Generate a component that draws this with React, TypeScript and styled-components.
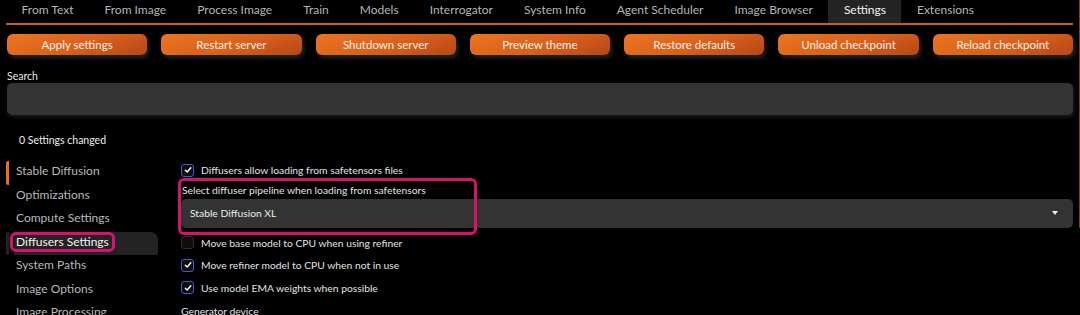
import styled, { createGlobalStyle } from 'styled-components';

const GlobalStyle = createGlobalStyle`
  html, body {
    margin: 0;
    padding: 0;
    background: #000;
    color: #e6e6e6;
    font-family: Lato, "Noto Sans", sans-serif;
    overflow: hidden;
  }
`

const Page = styled.div`
  position: relative;
  width: 1080px;
  height: 315px;
  overflow: hidden;
`

const ScrollEdge = styled.div`
  position: absolute;
  right: 0;
  top: 0;
  width: 1px;
  height: 228px;
  background: #7a4412;
`

const TabBar = styled.div`
  display: flex;
  margin: 0 7px 0 6px;
  height: 23px;
  border-bottom: 2px solid #c4620f;
`

const Tab = styled.div<{ $active?: boolean }>`
  padding: 0 15.5px;
  height: 23px;
  line-height: 20px;
  font-size: 12px;
  color: ${p => (p.$active ? '#f2f2f2' : '#b4b4b4')};
  background: ${p => (p.$active ? '#242424' : 'transparent')};
`

const ButtonRow = styled.div`
  display: flex;
  gap: 14px;
  margin: 9px 7px 0 7px;
`

const ActionButton = styled.button`
  flex: 1;
  height: 21px;
  border: none;
  border-radius: 6px;
  background: linear-gradient(160deg, #ec7420 0%, #d8601a 55%, #b6461a 100%);
  box-shadow: 2px 3px 4px rgba(70, 70, 70, 0.55);
  color: #f7f2ee;
  font-family: Lato, "Noto Sans", sans-serif;
  font-size: 11.5px;
  padding: 0;
`

const SearchLabel = styled.div`
  margin: 15px 7px 0 7px;
  font-size: 10.5px;
  color: #e8e8e8;
`

const SearchBox = styled.div`
  margin: 1px 7px 0 7px;
  height: 32px;
  background: #333;
  border-radius: 5px;
  box-shadow: 1px 2px 4px rgba(60, 60, 60, 0.5);
`

const ChangedNote = styled.div`
  margin: 19px 0 0 19px;
  font-size: 10.5px;
  color: #ededed;
`

const Body = styled.div`
  display: grid;
  grid-template-columns: 160px 1fr;
  margin: 13px 7px 0 6px;
`

const SideNav = styled.div`
  display: flex;
  flex-direction: column;
  padding-top: 2px;
`

const NavItem = styled.div<{ $current?: boolean; $selected?: boolean }>`
  height: 23.5px;
  line-height: 20px;
  margin-right: 8px;
  padding-left: 7px;
  font-size: 12px;
  color: ${p => (p.$selected ? '#f4f4f4' : '#b8b8b8')};
  border-left: 3px solid ${p => (p.$current ? '#e8701c' : 'transparent')};
  border-radius: 2px 8px 2px 2px;
  background: ${p => (p.$selected ? 'linear-gradient(90deg, transparent 5px, #232323 5px)' : 'transparent')};
`

const NavText = styled.span<{ $marked?: boolean }>`
  position: relative;
  &::after {
    content: '';
    display: ${p => (p.$marked ? 'block' : 'none')};
    position: absolute;
    left: -6px;
    top: -2px;
    right: -6px;
    bottom: -3px;
    border: 3px solid #d4136f;
    border-radius: 6px;
  }
`

const Main = styled.div`
  display: flex;
  flex-direction: column;
  padding-left: 15px;
  font-size: 10.3px;
  color: #e2e2e2;
`

const CheckRow = styled.div<{ $gapTop?: number }>`
  display: flex;
  align-items: center;
  gap: 7px;
  height: 22.5px;
  margin-top: ${p => p.$gapTop ?? 0}px;
`

const Box = styled.span<{ $on?: boolean }>`
  width: 11px;
  height: 11px;
  border-radius: 3px;
  border: 1px solid ${p => (p.$on ? '#3c5bd6' : '#2c2c2c')};
  background: #0d0d0d;
  display: flex;
  align-items: center;
  justify-content: center;
`

const Field = styled.div`
  position: relative;
  padding-top: 1px;
`

const FieldLabel = styled.div`
  height: 16px;
  line-height: 15px;
  padding-left: 1px;
`

const Dropdown = styled.div`
  display: flex;
  align-items: center;
  justify-content: space-between;
  height: 29px;
  padding: 0 15px 0 9px;
  background: #333;
  border-radius: 5px;
  color: #ededed;
`

const Caret = styled.span`
  width: 0;
  height: 0;
  border-left: 3.5px solid transparent;
  border-right: 3.5px solid transparent;
  border-top: 4px solid #f0f0f0;
`

const Highlight = styled.div`
  position: absolute;
  left: -3px;
  top: -4px;
  width: 299px;
  height: 57px;
  box-sizing: border-box;
  border: 3px solid #d4136f;
  border-radius: 6px;
  pointer-events: none;
`

const PlainLabel = styled.div`
  height: 24px;
  line-height: 24px;
`

function Check({ on }: { on: boolean }) {
  return (
    <Box $on={on}>
      {on && (
        <svg width="8" height="8" viewBox="0 0 8 8">
          <path d="M1.3 4.2 L3.2 6 L6.8 1.8" fill="none" stroke="#fff" strokeWidth="1.4" strokeLinecap="round" strokeLinejoin="round" />
        </svg>
      )}
    </Box>
  )
}

const tabs = ['From Text', 'From Image', 'Process Image', 'Train', 'Models', 'Interrogator', 'System Info', 'Agent Scheduler', 'Image Browser', 'Settings', 'Extensions']
const buttons = ['Apply settings', 'Restart server', 'Shutdown server', 'Preview theme', 'Restore defaults', 'Unload checkpoint', 'Reload checkpoint']
const nav = ['Stable Diffusion', 'Optimizations', 'Compute Settings', 'Diffusers Settings', 'System Paths', 'Image Options', 'Image Processing']

export default function App() {
  return (
    <Page>
      <GlobalStyle />
      <TabBar>
        {tabs.map(t => (
          <Tab key={t} $active={t === 'Settings'}>{t}</Tab>
        ))}
      </TabBar>

      <ButtonRow>
        {buttons.map(b => (
          <ActionButton key={b}>{b}</ActionButton>
        ))}
      </ButtonRow>

      <SearchLabel>Search</SearchLabel>
      <SearchBox />

      <ChangedNote>0 Settings changed</ChangedNote>

      <Body>
        <SideNav>
          {nav.map((n, i) => (
            <NavItem key={n} $current={i === 0} $selected={n === 'Diffusers Settings'}>
              <NavText $marked={n === 'Diffusers Settings'}>{n}</NavText>
            </NavItem>
          ))}
        </SideNav>

        <Main>
          <CheckRow>
            <Check on />
            <span>Diffusers allow loading from safetensors files</span>
          </CheckRow>
          <Field>
            <FieldLabel>Select diffuser pipeline when loading from safetensors</FieldLabel>
            <Dropdown>
              <span>Stable Diffusion XL</span>
              <Caret />
            </Dropdown>
            <Highlight />
          </Field>
          <CheckRow $gapTop={4}>
            <Check on={false} />
            <span>Move base model to CPU when using refiner</span>
          </CheckRow>
          <CheckRow>
            <Check on />
            <span>Move refiner model to CPU when not in use</span>
          </CheckRow>
          <CheckRow>
            <Check on />
            <span>Use model EMA weights when possible</span>
          </CheckRow>
          <PlainLabel>Generator device</PlainLabel>
        </Main>
      </Body>
      <ScrollEdge />
    </Page>
  )
}
